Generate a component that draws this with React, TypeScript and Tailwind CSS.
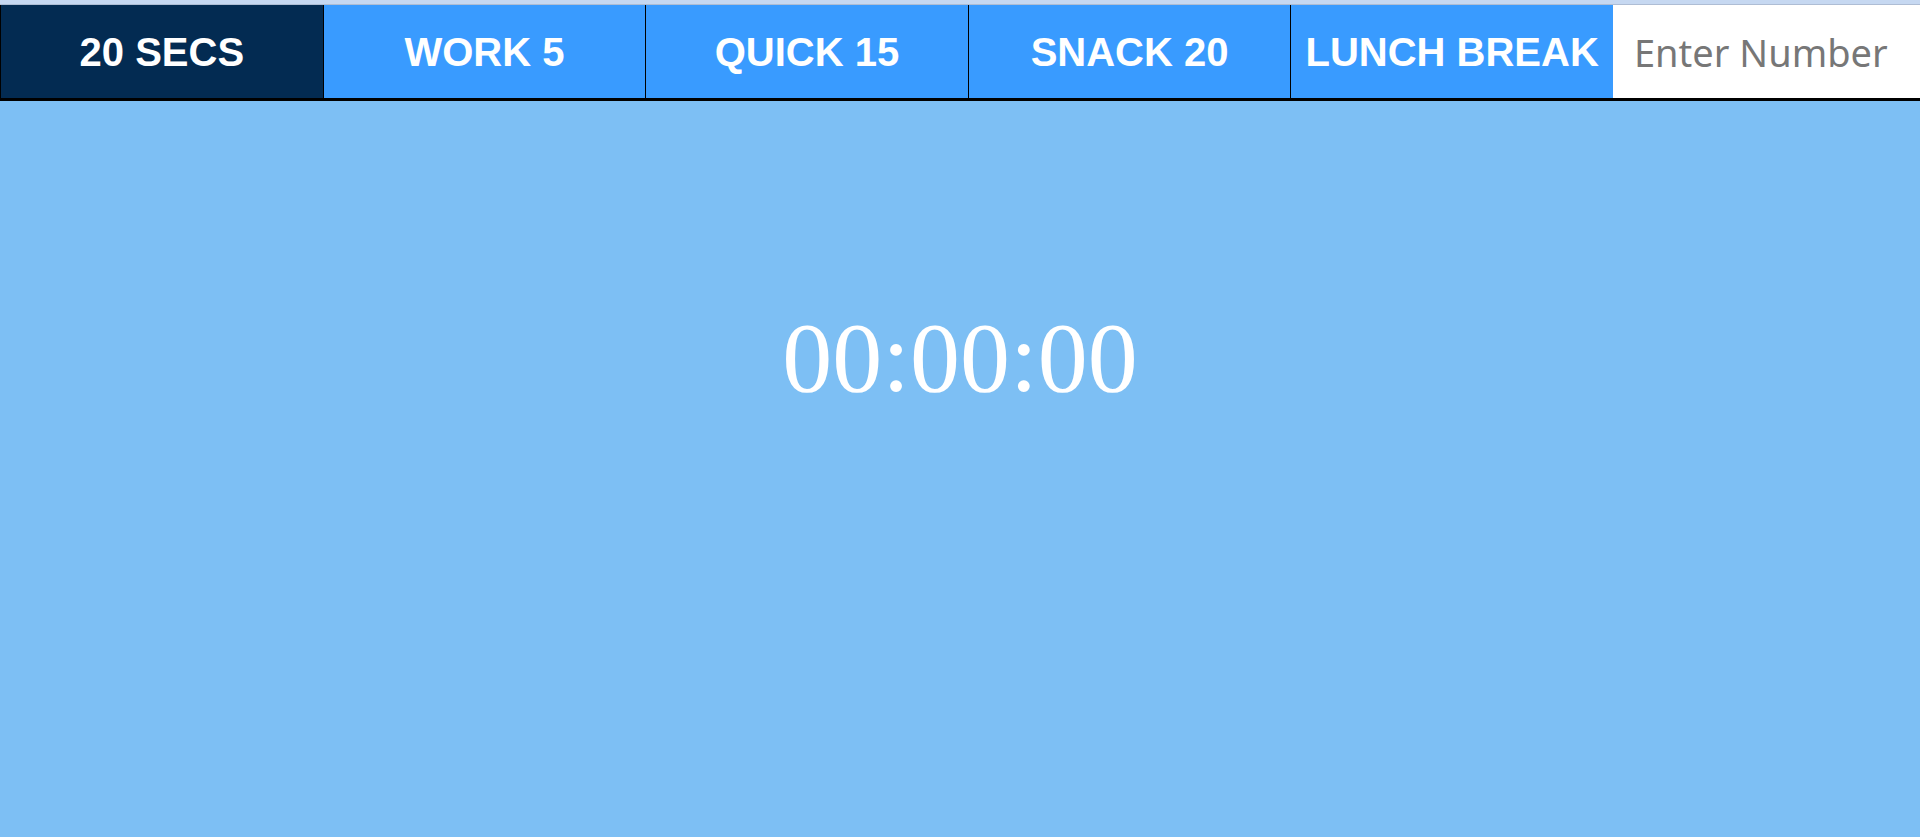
const presets = [
  { label: '20 SECS', active: true },
  { label: 'WORK 5', active: false },
  { label: 'QUICK 15', active: false },
  { label: 'SNACK 20', active: false },
  { label: 'LUNCH BREAK', active: false },
];

export default function App() {
  return (
    <div className="h-[837px] w-full overflow-hidden bg-[#7dbff4]">
      <div className="h-[5px] border-b border-[#aebdd4] bg-[#c6d8f1]" />
      <nav className="flex h-[96px] border-b-[3px] border-black">
        {presets.map((p) => (
          <button
            key={p.label}
            className={`flex h-full w-[322.6px] shrink-0 items-center justify-center border-l border-black font-['Liberation_Sans',Arial,sans-serif] text-[40px] font-bold text-white ${
              p.active ? 'bg-[#032b52]' : 'bg-[#399bff]'
            }`}
          >
            {p.label}
          </button>
        ))}
        <input
          type="text"
          placeholder="Enter Number"
          className="h-full min-w-0 flex-1 bg-white pl-[21px] font-['Comic_Sans_MS','Noto_Sans',sans-serif] text-[38px] text-[#333] outline-none placeholder:text-[#777]"
        />
      </nav>
      <main className="flex justify-center">
        <div className="mt-[207px] font-['Liberation_Serif','Times_New_Roman',serif] text-[100px] leading-none text-white">
          00:00:00
        </div>
      </main>
    </div>
  );
}
